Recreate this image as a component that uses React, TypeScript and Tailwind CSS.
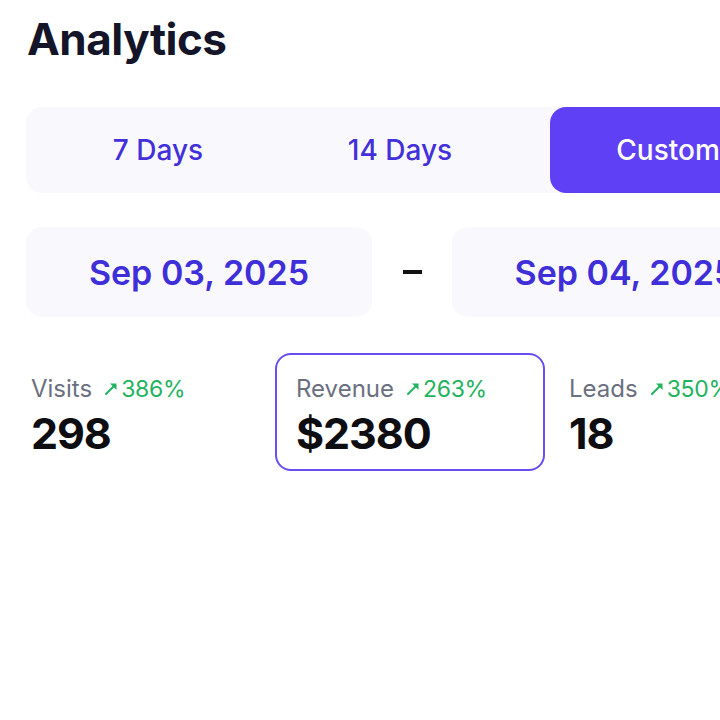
const stats = [
  { label: "Visits", change: "386%", value: "298" },
  { label: "Revenue", change: "263%", value: "$2380" },
  { label: "Leads", change: "350%", value: "18" },
];

function UpArrow() {
  return (
    <svg width="15" height="15" viewBox="0 0 15 15" className="mr-[2px]">
      <path d="M2 13L10 5" stroke="currentColor" strokeWidth="2" strokeLinecap="round" />
      <path d="M6 2.5H12.5V9Z" fill="currentColor" />
    </svg>
  );
}

function Stat({ label, change, value }: { label: string; change: string; value: string }) {
  return (
    <div className="flex flex-col pt-[6px]">
      <div className="flex items-center gap-[12px] text-[24px] leading-[32px]">
        <span className="text-[#6b7080]">{label}</span>
        <span className="flex items-center text-[23px] text-[#22b35e] tracking-[-0.3px]">
          <UpArrow />
          {change}
        </span>
      </div>
      <div className="mt-[3px] text-[43px] leading-[50px] font-bold text-[#0d0d12] tracking-tight">{value}</div>
    </div>
  );
}

export default function App() {
  return (
    <div className="w-[720px] h-[720px] bg-white overflow-hidden font-['Inter',sans-serif]">
      {/* Header */}
      <h1 className="pl-[27px] pt-[13px] text-[44px] leading-[52px] font-bold text-[#15152a] tracking-[-0.5px]">
        Analytics
      </h1>

      {/* Range tabs */}
      <div className="mt-[42px] ml-[26px] w-[760px] h-[86px] flex items-stretch rounded-2xl bg-[#f9f9fd]">
        <button className="w-[264px] text-[28px] font-medium text-[#4330d9]">7 Days</button>
        <button className="w-[220px] text-[28px] font-medium text-[#4330d9]">14 Days</button>
        <button className="ml-[40px] w-[236px] rounded-2xl bg-[#5f40f5] text-[28px] font-medium text-white">
          Custom
        </button>
      </div>

      {/* Dates */}
      <div className="mt-[34px] ml-[26px] flex items-center w-[780px]">
        <div className="w-[346px] h-[90px] shrink-0 rounded-2xl bg-[#f9f9fd] flex items-center justify-center text-[34px] font-semibold text-[#3f2fd8]">
          Sep 03, 2025
        </div>
        <div className="w-[80px] shrink-0 flex justify-center">
          <div className="w-[19px] h-[4px] bg-[#111]" />
        </div>
        <div className="w-[346px] h-[90px] shrink-0 rounded-2xl bg-[#f9f9fd] flex items-center justify-center text-[34px] font-semibold text-[#3f2fd8]">
          Sep 04, 2025
        </div>
      </div>

      {/* Stats */}
      <div className="mt-[36px] pl-[31px] flex items-center w-[800px]">
        <div className="w-[244px] shrink-0">
          <Stat {...stats[0]} />
        </div>
        <div className="w-[270px] h-[118px] shrink-0 rounded-2xl border-2 border-[#6a4ff0] px-[19px] flex items-center">
          <Stat {...stats[1]} />
        </div>
        <div className="ml-[24px] shrink-0">
          <Stat {...stats[2]} />
        </div>
      </div>
    </div>
  );
}
